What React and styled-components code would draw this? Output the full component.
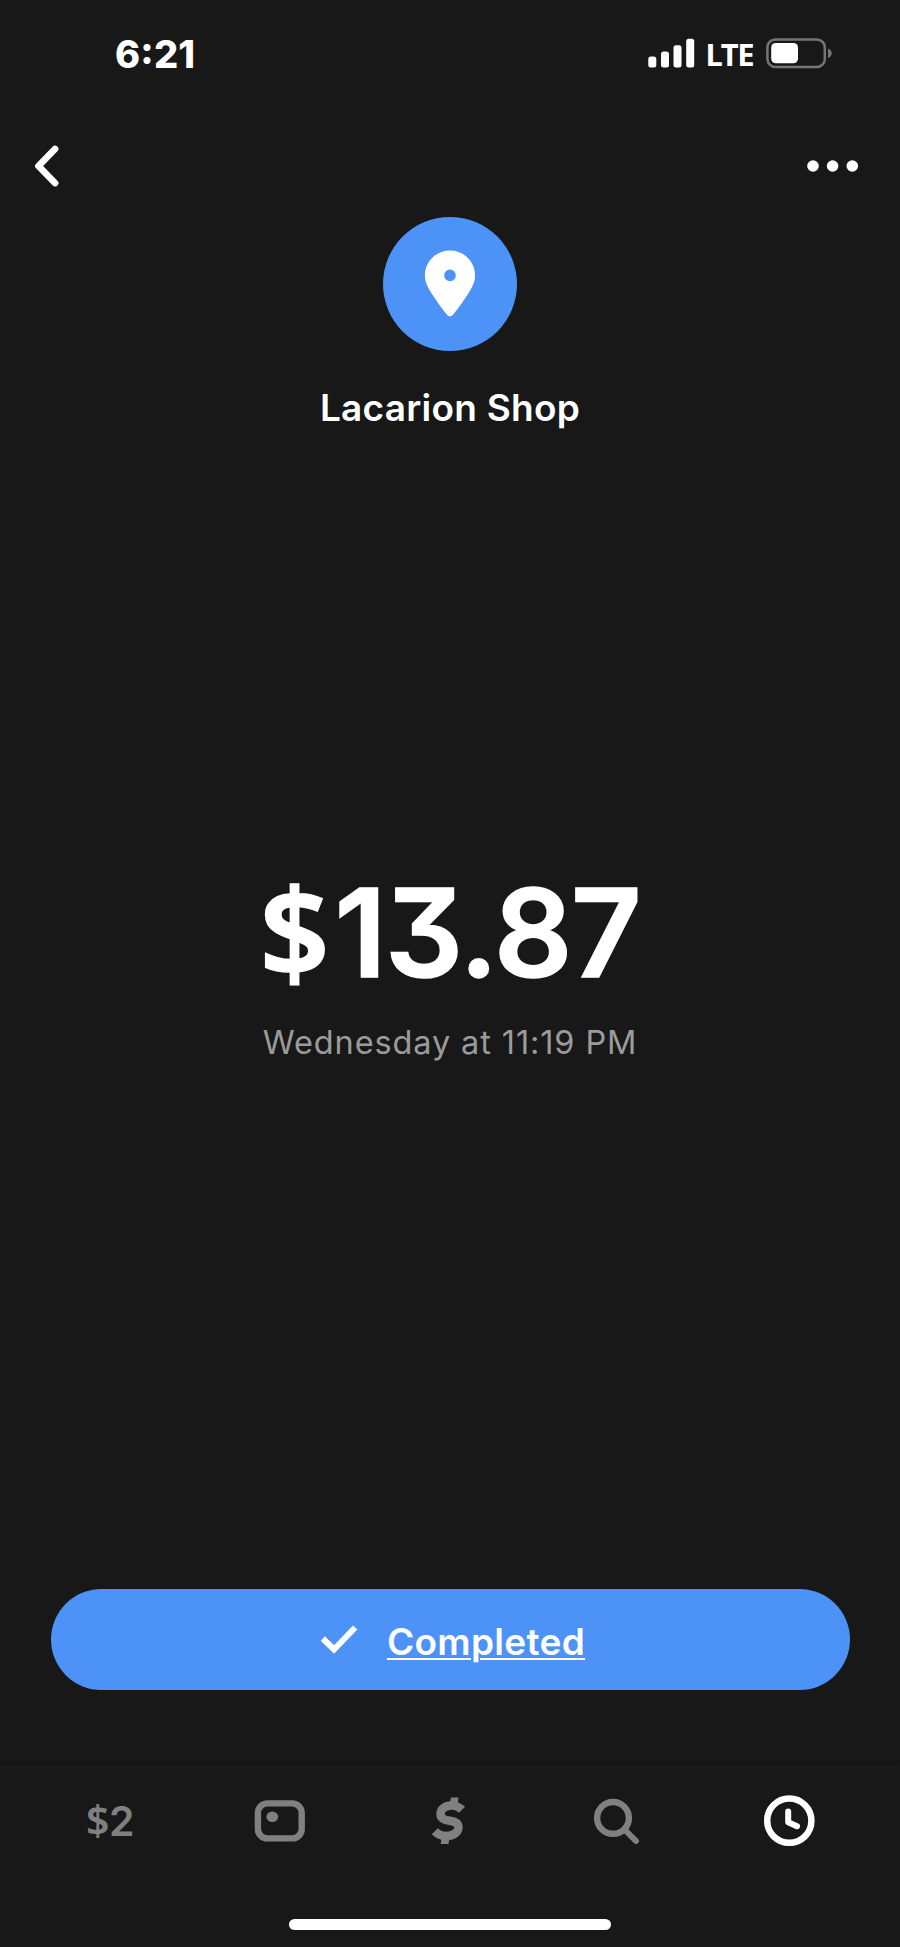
import React from "react";
import styled, { createGlobalStyle } from "styled-components";

const theme = {
  bg: "#181818",
  blue: "#4c92f7",
  white: "#ffffff",
  muted: "#9b9b9b",
  tab: "#808080",
};

const GlobalStyle = createGlobalStyle`
  * { box-sizing: border-box; }
  body {
    margin: 0;
    background: ${theme.bg};
    color: ${theme.white};
    font-family: Inter, "Liberation Sans", sans-serif;
  }
  svg { display: block; flex: none; }
  button {
    border: 0;
    padding: 0;
    background: none;
    color: inherit;
    font: inherit;
  }
`;

const Screen = styled.div`
  width: 900px;
  height: 1947px;
  display: flex;
  flex-direction: column;
  overflow: hidden;
  background: ${theme.bg};
`;

const StatusBar = styled.div`
  height: 108px;
  display: flex;
  align-items: center;
  justify-content: space-between;
  padding: 0 66px 0 115px;
`;

const Time = styled.span`
  font-size: 38px;
  font-weight: 800;
  line-height: 40px;
  letter-spacing: 0.2px;
  font-feature-settings: "calt" 1, "case" 1;
`;

const StatusIcons = styled.div`
  display: flex;
  align-items: center;
`;

const Network = styled.span`
  margin: 0 13px 0 10px;
  font-family: "Noto Sans", sans-serif;
  font-size: 31px;
  font-weight: 700;
  line-height: 30px;
  letter-spacing: -1.5px;
`;

const Header = styled.header`
  height: 108.5px;
  padding: 7.5px 40px 0 31.5px;
  display: flex;
  align-items: center;
  justify-content: space-between;
`;

const Main = styled.main`
  flex: 1;
  display: flex;
  flex-direction: column;
  align-items: center;
  padding: 0 50.5px 74.5px;
`;

const Avatar = styled.div`
  width: 134.5px;
  height: 134.5px;
  border-radius: 50%;
  background: ${theme.blue};
  display: flex;
  align-items: center;
  justify-content: center;
`;

const Merchant = styled.h1`
  margin: 35px 0 0;
  font-size: 37px;
  font-weight: 600;
  line-height: 44px;
  letter-spacing: 0.25px;
`;

const Amount = styled.div`
  margin-top: 438px;
  height: 130px;
  font-size: 122.5px;
  font-weight: 600;
  line-height: 130px;
  letter-spacing: -1.2px;
  font-feature-settings: "cv09" 1;
  -webkit-text-stroke: 1.6px ${theme.white};
`;

const Currency = styled.span`
  margin-right: ${(p) => p.$gap}px;
  font-family: "Noto Sans", sans-serif;
  line-height: 1;
`;

const Timestamp = styled.div`
  margin-top: 24.5px;
  font-size: 32.5px;
  line-height: 40px;
  letter-spacing: 0.88px;
  color: ${theme.muted};
`;

const StatusButton = styled.button`
  width: 100%;
  height: 101px;
  margin-top: auto;
  padding-left: 5px;
  border-radius: 51px;
  background: ${theme.blue};
  display: flex;
  align-items: center;
  justify-content: center;
  gap: 29px;
`;

const ButtonLabel = styled.span`
  padding-top: 5px;
  font-size: 37px;
  font-weight: 600;
  line-height: 44px;
  letter-spacing: 0.3px;
  text-decoration: underline;
  text-decoration-thickness: 2px;
  text-underline-offset: 2.5px;
`;

const BottomNav = styled.nav`
  height: 182.5px;
  padding-top: 25.5px;
  display: flex;
  flex-direction: column;
  align-items: center;
  background: ${theme.bg};
  box-shadow: 0 -1px 4px rgba(0, 0, 0, 0.35);
`;

const Tabs = styled.div`
  width: 850px;
  height: 60px;
  display: grid;
  grid-template-columns: repeat(5, 1fr);
`;

const Tab = styled.button`
  display: flex;
  align-items: center;
  justify-content: center;
  color: ${(p) => (p.$active ? theme.white : theme.tab)};
`;

const Balance = styled.span`
  height: 44px;
  margin-top: 2px;
  font-size: 41px;
  font-weight: 600;
  line-height: 44px;
  letter-spacing: -0.5px;
`;

const HomeIndicator = styled.div`
  width: 322px;
  height: 10.5px;
  margin-top: 69px;
  border-radius: 6px;
  background: ${theme.white};
`;

const SignalIcon = () => (
  <svg width="48" height="32" fill="#fff">
    <rect x="0.3" y="18.5" width="8" height="11" rx="2.5" />
    <rect x="13" y="13.5" width="8" height="16" rx="2.5" />
    <rect x="25.5" y="7.3" width="8" height="22.2" rx="2.5" />
    <rect x="38.2" y="0.7" width="8" height="28.8" rx="2.5" />
  </svg>
);

const BatteryIcon = () => (
  <svg width="68" height="32" fill="none">
    <rect x="1.4" y="1.4" width="57.4" height="27.6" rx="8" stroke="#757575" strokeWidth="2.5" />
    <rect x="5.2" y="5" width="26.8" height="20.2" rx="4.5" fill="#fff" />
    <path d="M62 10.500c5 1.800 5 7.700 0 9.500z" fill="#757575" />
  </svg>
);

const BackIcon = () => (
  <svg width="30" height="46" fill="none" stroke="#fff" strokeWidth="6.800" strokeLinecap="round" strokeLinejoin="round">
    <path d="M23 6L6.500 23L23 40" />
  </svg>
);

const MoreIcon = () => (
  <svg width="54" height="14" fill="#fff">
    <circle cx="7" cy="7" r="5.8" />
    <circle cx="26.600" cy="7" r="5.8" />
    <circle cx="46.300" cy="7" r="5.8" />
  </svg>
);

const PinIcon = () => (
  <svg width="52" height="68" viewBox="0 0 52 68">
    <path
      fill="#fff"
      fillRule="evenodd"
      d="M26 0.500C12 0.500 0.900 11.500 0.900 25.500C0.900 32.500 4.500 38.500 8 44C12.500 51 18 58.500 23 64.800Q26 68 29 64.800C34 58.500 39.500 51 44 44C47.500 38.500 51.100 32.500 51.100 25.500C51.100 11.500 40 0.500 26 0.500ZM26 19.600a5.800 5.800 0 1 1 0 11.600a5.800 5.800 0 1 1 0-11.600Z"
    />
  </svg>
);

const CheckIcon = () => (
  <svg width="38" height="30" fill="none" stroke="#fff" strokeWidth="6">
    <path d="M2.800 13.500L14 24.500L35.200 2.500" />
  </svg>
);

const CardIcon = () => (
  <svg width="60" height="60" fill="none">
    <rect x="7.900" y="13.400" width="43.800" height="35" rx="9.500" stroke="currentColor" strokeWidth="6.400" />
    <ellipse cx="22.300" cy="26.700" rx="5.900" ry="5.200" fill="currentColor" />
  </svg>
);

const CashIcon = () => (
  <svg width="60" height="60" fill="none" stroke="currentColor">
    <path
      d="M42 19.800C38.800 16.500 35 15.400 31.500 15.400C25.500 15.400 20.500 19 20.500 24C20.500 34 38.500 27.500 38.500 37C38.500 42.500 33 46 26.500 46C22 46 18 44.500 14.800 41.200"
      strokeWidth="8.500"
    />
    <path d="M31 7.500H38.600L37 17H29ZM22.500 43H30.500L28.500 54H20.600Z" fill="currentColor" stroke="none" />
  </svg>
);

const SearchIcon = () => (
  <svg width="60" height="60" fill="none" stroke="currentColor" strokeLinecap="round">
    <circle cx="23" cy="27.900" r="15.900" strokeWidth="6.400" />
    <path d="M35 40L46 51" strokeWidth="6" />
  </svg>
);

const ClockIcon = () => (
  <svg width="60" height="60" fill="none" stroke="currentColor" strokeLinecap="round" strokeLinejoin="round">
    <circle cx="29.300" cy="30.700" r="22.100" strokeWidth="6.500" />
    <path d="M28.200 21.500V32.200L37 36.200" strokeWidth="6" />
  </svg>
);

export default function App() {
  return (
    <Screen>
      <GlobalStyle />
      <StatusBar>
        <Time>6:21</Time>
        <StatusIcons>
          <SignalIcon />
          <Network>LTE</Network>
          <BatteryIcon />
        </StatusIcons>
      </StatusBar>
      <Header>
        <button aria-label="Back"><BackIcon /></button>
        <button aria-label="More"><MoreIcon /></button>
      </Header>
      <Main>
        <Avatar><PinIcon /></Avatar>
        <Merchant>Lacarion Shop</Merchant>
        <Amount><Currency $gap={6}>$</Currency>13.87</Amount>
        <Timestamp>Wednesday at 11:19 PM</Timestamp>
        <StatusButton>
          <CheckIcon />
          <ButtonLabel>Completed</ButtonLabel>
        </StatusButton>
      </Main>
      <BottomNav>
        <Tabs>
          <Tab><Balance><Currency $gap={0}>$</Currency>2</Balance></Tab>
          <Tab aria-label="Card"><CardIcon /></Tab>
          <Tab aria-label="Cash"><CashIcon /></Tab>
          <Tab aria-label="Search"><SearchIcon /></Tab>
          <Tab aria-label="Activity" $active><ClockIcon /></Tab>
        </Tabs>
        <HomeIndicator />
      </BottomNav>
    </Screen>
  );
}
